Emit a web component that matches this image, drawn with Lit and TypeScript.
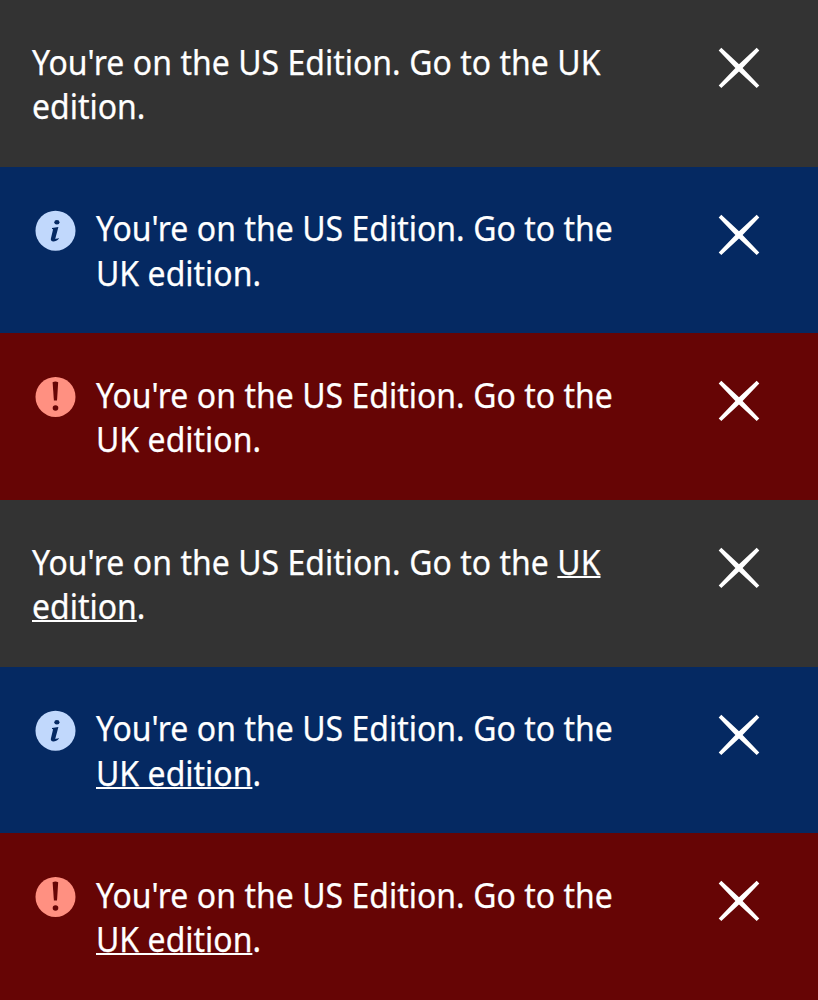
import { LitElement, html, css, svg, nothing } from "lit";
import { customElement, property } from "lit/decorators.js";

type Tone = "neutral" | "info" | "error";

@customElement("notice-banner")
class NoticeBanner extends LitElement {
  @property() tone: Tone = "neutral";
  @property({ type: Boolean }) linked = false;

  static styles = css`
    :host { display: block; min-height: 0; }
    .banner {
      box-sizing: border-box; height: 100%; display: flex; align-items: flex-start;
      padding: 40px 55px 0 32px; color: #fff;
      font-family: "Noto Sans", "Open Sans", sans-serif;
    }
    .neutral { background: #333333; }
    .info { background: #052962; }
    .error { background: #660505; }
    .symbol { flex: none; display: block; width: 48px; height: 48px; margin-right: 16px; }
    .message {
      flex: none; width: 636px; margin: -0.5px 0 0; font-size: 34.5px; line-height: 44.6px;
      word-spacing: 0.2px; -webkit-text-stroke: 0.25px currentColor;
      transform: scaleX(0.926); transform-origin: 0 0;
    }
    .info .message, .error .message { width: 572px; }
    a { color: inherit; text-decoration: underline; text-decoration-thickness: 2px; text-underline-offset: 0.5px; text-decoration-skip-ink: none; }
    button { flex: none; display: block; margin: 4px 0 0 auto; padding: 0; border: 0; background: none; color: inherit; width: 48px; height: 48px; }
    button svg { display: block; width: 48px; height: 48px; }
  `;

  private symbol() {
    if (this.tone === "neutral") return nothing;
    const glyph = this.tone === "info"
      ? svg`<circle cx="23.5" cy="23.7" r="20" fill="#c1d8fc"/>
          <ellipse cx="24.9" cy="15.3" rx="2.6" ry="2.2" fill="#052962"/>
          <path d="M20 20.9 L26.4 20.1 L23.4 31.3 C23.2 32.3 23.8 32.2 26.6 31.1 L26.8 31.8 C25.3 33.5 23.3 34.4 21.4 34.4 C19.3 34.4 18.5 33.3 18.9 31.5 L21.1 22.3 L20 21.9 Z" fill="#052962"/>`
      : svg`<circle cx="23.5" cy="23.9" r="20" fill="#ff9081"/>
          <path d="M20.6 9.2 Q23.4 7.7 26.2 9.2 L25 27.6 H21.9 Z" fill="#660505"/>
          <circle cx="23.5" cy="35" r="2.8" fill="#660505"/>`;
    return html`<svg class="symbol" viewBox="0 0 48 48" aria-hidden="true">${glyph}</svg>`;
  }

  render() {
    return html`<div class="banner ${this.tone}">
      ${this.symbol()}
      <p class="message">You're on the US Edition. Go to the ${this.linked ? html`<a>UK edition</a>` : "UK edition"}.</p>
      <button aria-label="Close"><svg viewBox="0 0 48 48">
        <path fill="currentColor" d="M6.3 3.8 L24 20.2 L41.7 3.8 L44.3 6.4 L27.6 24 L44.3 41.4 L41.7 44 L24 27.6 L6.3 44 L3.7 41.4 L20.4 24 L3.7 6.4 Z"/>
      </svg></button>
    </div>`;
  }
}

@customElement("app-root")
class AppRoot extends LitElement {
  static styles = css`
    :host { display: grid; grid-template-rows: repeat(6, minmax(0, 1fr)); height: 1000px; }
  `;
  render() {
    const tones: Tone[] = ["neutral", "info", "error"];
    return [false, true].map((linked) =>
      tones.map((tone) => html`<notice-banner .tone=${tone} .linked=${linked}></notice-banner>`));
  }
}
